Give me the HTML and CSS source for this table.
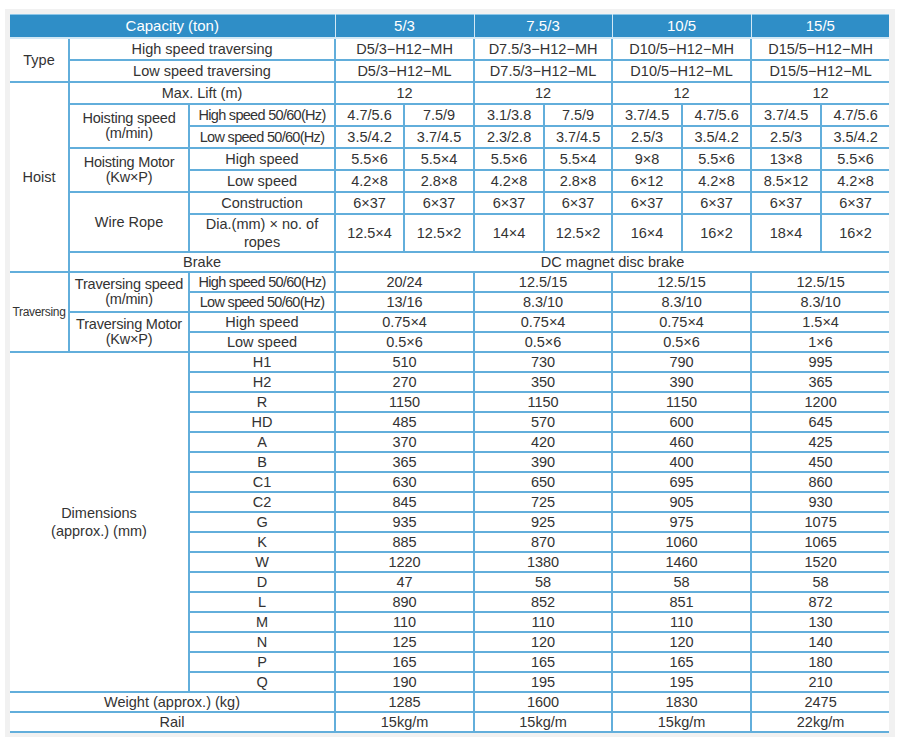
FILE: index.html
```html
<!DOCTYPE html>
<html>
<head>
<meta charset="utf-8">
<link rel="stylesheet" href="styles.css">
</head>
<body>
<div class="panel">
<table class="spec">
<colgroup>
<col class="c1"><col class="c2"><col class="c3">
<col class="d1"><col class="d2"><col class="d3"><col class="d4"><col class="d5"><col class="d6"><col class="d7"><col class="d8">
</colgroup>
<thead>
<tr class="head"><th colspan="3">Capacity (ton)</th><th colspan="2">5/3</th><th colspan="2">7.5/3</th><th colspan="2">10/5</th><th colspan="2">15/5</th></tr>
</thead>
<tbody>
<tr class="tall"><td rowspan="2">Type</td><td colspan="2">High speed traversing</td><td colspan="2">D5/3−H12−MH</td><td colspan="2">D7.5/3−H12−MH</td><td colspan="2">D10/5−H12−MH</td><td colspan="2">D15/5−H12−MH</td></tr>
<tr class="tall"><td colspan="2">Low speed traversing</td><td colspan="2">D5/3−H12−ML</td><td colspan="2">D7.5/3−H12−ML</td><td colspan="2">D10/5−H12−ML</td><td colspan="2">D15/5−H12−ML</td></tr>
<tr class="tall"><td rowspan="8">Hoist</td><td colspan="2">Max. Lift (m)</td><td colspan="2">12</td><td colspan="2">12</td><td colspan="2">12</td><td colspan="2">12</td></tr>
<tr class="tall"><td rowspan="2" class="lbl">Hoisting speed<br>(m/min)</td><td class="sub">High speed 50/60(Hz)</td><td>4.7/5.6</td><td>7.5/9</td><td>3.1/3.8</td><td>7.5/9</td><td>3.7/4.5</td><td>4.7/5.6</td><td>3.7/4.5</td><td>4.7/5.6</td></tr>
<tr class="tall"><td class="sub">Low speed 50/60(Hz)</td><td>3.5/4.2</td><td>3.7/4.5</td><td>2.3/2.8</td><td>3.7/4.5</td><td>2.5/3</td><td>3.5/4.2</td><td>2.5/3</td><td>3.5/4.2</td></tr>
<tr class="tall"><td rowspan="2" class="lbl">Hoisting Motor<br>(Kw×P)</td><td>High speed</td><td>5.5×6</td><td>5.5×4</td><td>5.5×6</td><td>5.5×4</td><td>9×8</td><td>5.5×6</td><td>13×8</td><td>5.5×6</td></tr>
<tr class="tall"><td>Low speed</td><td>4.2×8</td><td>2.8×8</td><td>4.2×8</td><td>2.8×8</td><td>6×12</td><td>4.2×8</td><td>8.5×12</td><td>4.2×8</td></tr>
<tr class="tall"><td rowspan="2">Wire Rope</td><td>Construction</td><td>6×37</td><td>6×37</td><td>6×37</td><td>6×37</td><td>6×37</td><td>6×37</td><td>6×37</td><td>6×37</td></tr>
<tr class="dia"><td class="wrap">Dia.(mm) × no. of<br>ropes</td><td>12.5×4</td><td>12.5×2</td><td>14×4</td><td>12.5×2</td><td>16×4</td><td>16×2</td><td>18×4</td><td>16×2</td></tr>
<tr><td colspan="2">Brake</td><td colspan="8">DC magnet disc brake</td></tr>
<tr><td rowspan="4" class="small">Traversing</td><td rowspan="2" class="lbl">Traversing speed<br>(m/min)</td><td class="sub">High speed 50/60(Hz)</td><td colspan="2">20/24</td><td colspan="2">12.5/15</td><td colspan="2">12.5/15</td><td colspan="2">12.5/15</td></tr>
<tr><td class="sub">Low speed 50/60(Hz)</td><td colspan="2">13/16</td><td colspan="2">8.3/10</td><td colspan="2">8.3/10</td><td colspan="2">8.3/10</td></tr>
<tr><td rowspan="2" class="lbl">Traversing Motor<br>(Kw×P)</td><td>High speed</td><td colspan="2">0.75×4</td><td colspan="2">0.75×4</td><td colspan="2">0.75×4</td><td colspan="2">1.5×4</td></tr>
<tr><td>Low speed</td><td colspan="2">0.5×6</td><td colspan="2">0.5×6</td><td colspan="2">0.5×6</td><td colspan="2">1×6</td></tr>
<tr><td colspan="2" rowspan="17" class="dimlbl">Dimensions<br>(approx.) (mm)</td><td>H1</td><td colspan="2">510</td><td colspan="2">730</td><td colspan="2">790</td><td colspan="2">995</td></tr>
<tr><td>H2</td><td colspan="2">270</td><td colspan="2">350</td><td colspan="2">390</td><td colspan="2">365</td></tr>
<tr><td>R</td><td colspan="2">1150</td><td colspan="2">1150</td><td colspan="2">1150</td><td colspan="2">1200</td></tr>
<tr><td>HD</td><td colspan="2">485</td><td colspan="2">570</td><td colspan="2">600</td><td colspan="2">645</td></tr>
<tr><td>A</td><td colspan="2">370</td><td colspan="2">420</td><td colspan="2">460</td><td colspan="2">425</td></tr>
<tr><td>B</td><td colspan="2">365</td><td colspan="2">390</td><td colspan="2">400</td><td colspan="2">450</td></tr>
<tr><td>C1</td><td colspan="2">630</td><td colspan="2">650</td><td colspan="2">695</td><td colspan="2">860</td></tr>
<tr><td>C2</td><td colspan="2">845</td><td colspan="2">725</td><td colspan="2">905</td><td colspan="2">930</td></tr>
<tr><td>G</td><td colspan="2">935</td><td colspan="2">925</td><td colspan="2">975</td><td colspan="2">1075</td></tr>
<tr><td>K</td><td colspan="2">885</td><td colspan="2">870</td><td colspan="2">1060</td><td colspan="2">1065</td></tr>
<tr><td>W</td><td colspan="2">1220</td><td colspan="2">1380</td><td colspan="2">1460</td><td colspan="2">1520</td></tr>
<tr><td>D</td><td colspan="2">47</td><td colspan="2">58</td><td colspan="2">58</td><td colspan="2">58</td></tr>
<tr><td>L</td><td colspan="2">890</td><td colspan="2">852</td><td colspan="2">851</td><td colspan="2">872</td></tr>
<tr><td>M</td><td colspan="2">110</td><td colspan="2">110</td><td colspan="2">110</td><td colspan="2">130</td></tr>
<tr><td>N</td><td colspan="2">125</td><td colspan="2">120</td><td colspan="2">120</td><td colspan="2">140</td></tr>
<tr><td>P</td><td colspan="2">165</td><td colspan="2">165</td><td colspan="2">165</td><td colspan="2">180</td></tr>
<tr><td>Q</td><td colspan="2">190</td><td colspan="2">195</td><td colspan="2">195</td><td colspan="2">210</td></tr>
<tr><td colspan="3">Weight (approx.) (kg)</td><td colspan="2">1285</td><td colspan="2">1600</td><td colspan="2">1830</td><td colspan="2">2475</td></tr>
<tr class="last"><td colspan="3">Rail</td><td colspan="2">15kg/m</td><td colspan="2">15kg/m</td><td colspan="2">15kg/m</td><td colspan="2">22kg/m</td></tr>
</tbody>
</table>
</div>
</body>
</html>
```
FILE: styles.css
```css
html, body {
  margin: 0;
  padding: 0;
  background: #ffffff;
}
.panel {
  margin: 9px 6px 0 5px;
  padding: 5px 6px 4px 5px;
  background: #f1f1f1;
}
.spec {
  width: 879px;
  table-layout: fixed;
  border-collapse: collapse;
  background: #ffffff;
  font-family: "Liberation Sans", Arial, sans-serif;
  font-size: 14.5px;
  color: #333333;
}
.c1 { width: 59px; }
.c2 { width: 120px; }
.c3 { width: 146px; }
.d1 { width: 69px; }
.d2 { width: 70px; }
.d3 { width: 70px; }
.d4 { width: 68px; }
.d5 { width: 70px; }
.d6 { width: 69px; }
.d7 { width: 70px; }
.d8 { width: 68px; }
.spec td, .spec th {
  border: 2px solid #62aedb;
  padding: 0;
  text-align: center;
  vertical-align: middle;
  height: 18px;
  line-height: 16px;
  white-space: nowrap;
  overflow: hidden;
}
.spec tr > :first-child { border-left: none; }
.spec tr > :last-child { border-right: none; }
.spec td[rowspan] { border-left: none; }
.spec td.lbl { border-left: 2px solid #62aedb; }
.spec td.dimlbl { border-left: none; line-height: 18px; }
.spec tr.head th {
  background: #2f8ec7;
  color: #ffffff;
  font-size: 15px;
  font-weight: normal;
  height: 22px;
  border-top: 1px solid #8cc6e8;
  border-left: 1px solid #d2e8f5;
  border-right: 1px solid #d2e8f5;
  border-bottom: 2px solid #d2e8f5;
}
.spec tr.head th:first-child { border-left: none; }
.spec tr.head th:last-child { border-right: none; }
.spec tr.tall td { height: 20px; }
.spec tr.dia td { height: 36px; }
.spec td.wrap { line-height: 18px; }
.spec td.small { font-size: 12px; letter-spacing: -0.3px; }
.spec td.lbl { line-height: 15px; letter-spacing: -0.2px; }
.spec td.sub { letter-spacing: -0.7px; }
```
